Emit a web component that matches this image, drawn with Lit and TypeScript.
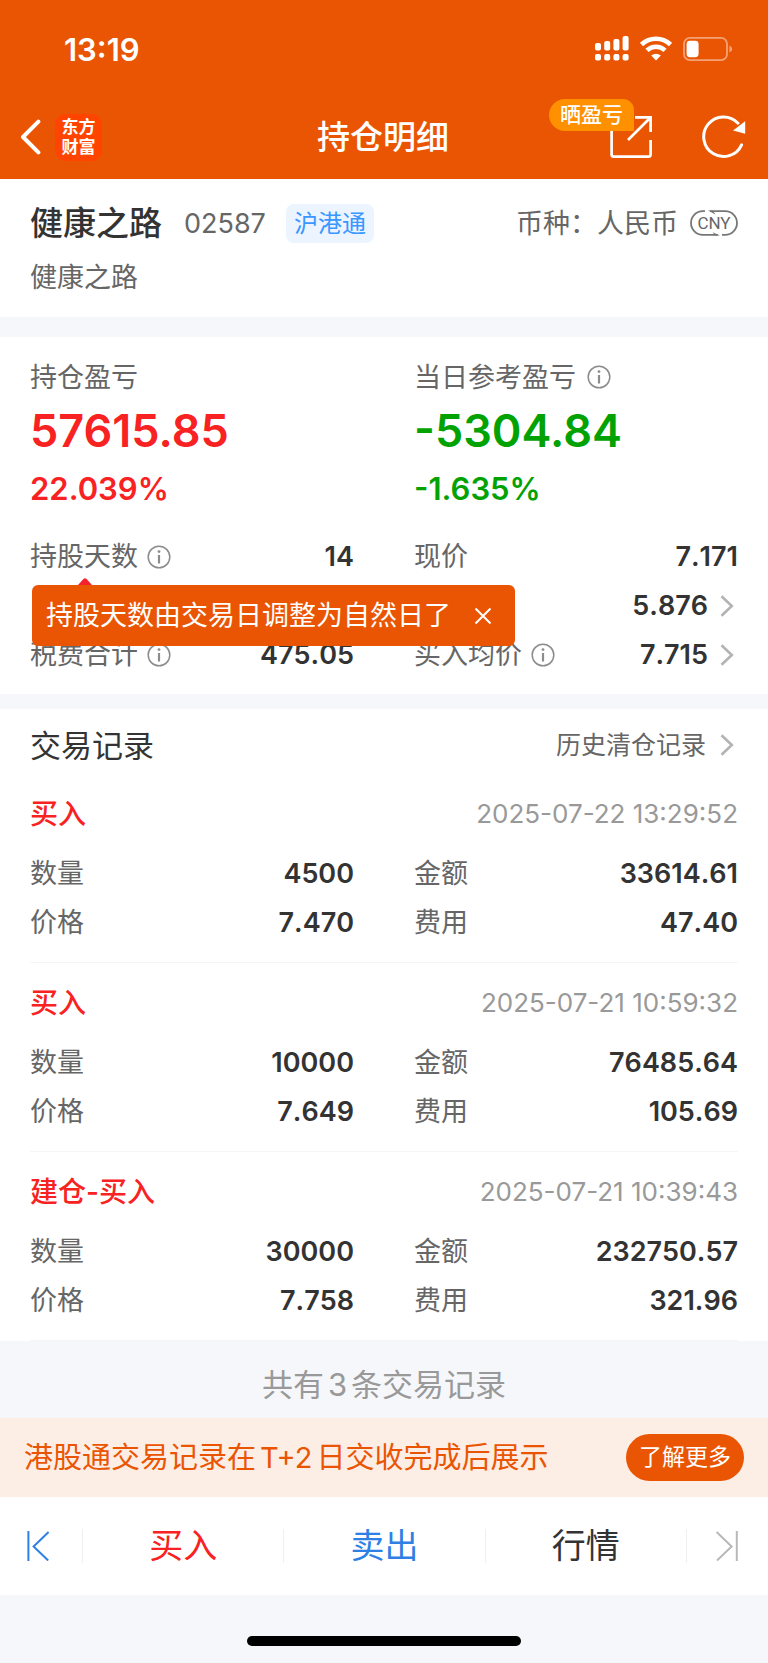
import { LitElement, html, css, svg, nothing } from "lit";
import { customElement, property, state } from "lit/decorators.js";

interface Field {
  label: string;
  value: string;
  info?: boolean;
  link?: boolean;
}

interface Trade {
  type: string;
  time: string;
  fields: Field[];
}

const positionFields: Field[] = [
  { label: "持股天数", value: "14", info: true },
  { label: "现价", value: "7.171" },
  { label: "", value: "" },
  { label: "", value: "5.876", link: true },
  { label: "税费合计", value: "475.05", info: true },
  { label: "买入均价", value: "7.715", info: true, link: true },
];

const trade = (type: string, time: string, qty: string, amount: string, price: string, fee: string): Trade => ({
  type,
  time,
  fields: [
    { label: "数量", value: qty },
    { label: "金额", value: amount },
    { label: "价格", value: price },
    { label: "费用", value: fee },
  ],
});

const trades: Trade[] = [
  trade("买入", "2025-07-22 13:29:52", "4500", "33614.61", "7.470", "47.40"),
  trade("买入", "2025-07-21 10:59:32", "10000", "76485.64", "7.649", "105.69"),
  trade("建仓-买入", "2025-07-21 10:39:43", "30000", "232750.57", "7.758", "321.96"),
];

const infoIcon = html`<svg width="24" height="24" viewBox="0 0 24 24" fill="none" stroke="#8c8c8c" aria-hidden="true">
  <circle cx="12" cy="12" r="10.8" stroke-width="1.5" />
  <path d="M12 10v8.5" stroke-width="2.2" />
  <circle cx="12" cy="6.6" r="1.4" fill="#8c8c8c" stroke="none" />
</svg>`;

const chevronIcon = html`<svg width="14" height="22" viewBox="0 0 14 22" fill="none" stroke="#b3b3b3" stroke-width="2.6" aria-hidden="true">
  <path d="M1.5 1.2 11.8 11 1.5 20.8" />
</svg>`;

@customElement("field-row")
class FieldRow extends LitElement {
  @property({ attribute: false }) field!: Field;

  static styles = css`
    :host {
      display: flex;
      align-items: center;
      justify-content: space-between;
      height: 49px;
    }
    .label {
      display: flex;
      align-items: center;
      gap: 9px;
      color: #666;
    }
    .value {
      display: flex;
      align-items: center;
      gap: 12px;
      font-weight: 600;
      font-kerning: none;
      color: #333;
      text-decoration: none;
    }
    .value svg {
      margin-right: 4px;
    }
    svg {
      display: block;
    }
  `;

  render() {
    const { label, value, info, link } = this.field;
    return html`
      <span class="label">${label}${info ? infoIcon : nothing}</span>
      ${link
        ? html`<a class="value" href="#">${value}${chevronIcon}</a>`
        : html`<span class="value">${value}</span>`}
    `;
  }
}

@customElement("app-root")
class AppRoot extends LitElement {
  @state() private tipOpen = true;

  static styles = css`
    :host {
      display: flex;
      flex-direction: column;
      min-height: 100vh;
      background: #f6f7fa;
      color: #333;
      font-family: Inter, "Noto Sans CJK SC", sans-serif;
      font-size: 27px;
      line-height: 1;
    }
    h1,
    h2,
    h3,
    p {
      margin: 0;
      font-weight: 400;
      font-size: inherit;
    }
    button {
      border: 0;
      padding: 0;
      background: none;
      font: inherit;
      color: inherit;
      cursor: pointer;
    }
    a {
      color: inherit;
      text-decoration: none;
    }
    svg {
      display: block;
    }
    .top {
      background: #ea5504;
      color: #fff;
      padding-bottom: 3px;
    }
    .status {
      display: flex;
      align-items: center;
      justify-content: space-between;
      height: 98px;
      padding: 0 35px 0 64px;
      font-size: 31px;
      font-weight: 600;
    }
    .status-icons {
      display: flex;
      align-items: center;
      gap: 11px;
    }
    .nav {
      display: grid;
      grid-template-columns: 1fr auto 1fr;
      align-items: center;
      height: 78px;
      padding: 0 22px 0 20px;
    }
    .nav-left {
      display: flex;
      align-items: center;
      gap: 14px;
    }
    .logo {
      display: grid;
      place-content: center;
      width: 47px;
      height: 47px;
      border-radius: 11px;
      background: #ff4400;
      font-size: 17px;
      line-height: 20px;
      font-weight: 700;
    }
    .title {
      font-size: 33px;
      font-weight: 500;
    }
    .nav-right {
      display: flex;
      align-items: center;
      justify-content: flex-end;
      gap: 49px;
    }
    .share {
      position: relative;
    }
    .badge {
      position: absolute;
      right: 19px;
      bottom: 28px;
      padding: 0 11px;
      border-radius: 16px 11px 0 16px;
      background: #ff9000;
      font-size: 21px;
      line-height: 32px;
      font-weight: 500;
      white-space: nowrap;
    }
    .card {
      background: #fff;
      padding: 0 30px;
    }
    .stock {
      padding-top: 17px;
      padding-bottom: 13px;
      margin-bottom: 20px;
      color: #666;
    }
    .stock-line {
      display: flex;
      align-items: center;
      height: 54px;
    }
    .stock-name {
      font-size: 33px;
      font-weight: 500;
      color: #333;
    }
    .stock-code {
      margin-left: 22px;
    }
    .tag {
      margin-left: 20px;
      padding: 0 8px;
      border-radius: 8px;
      background: #ebf4ff;
      color: #3a97ff;
      font-size: 24px;
      line-height: 39px;
    }
    .currency {
      display: flex;
      align-items: center;
      gap: 12px;
      margin-left: auto;
    }
    .position {
      padding-top: 13px;
      padding-bottom: 15px;
      margin-bottom: 15px;
    }
    .pair {
      display: grid;
      grid-template-columns: 1fr 1fr;
      column-gap: 60px;
    }
    .summary {
      margin-bottom: 12px;
    }
    .summary-label {
      display: flex;
      align-items: center;
      gap: 11px;
      height: 54px;
      color: #666;
    }
    .amount {
      font-size: 45px;
      line-height: 54px;
      font-weight: 600;
    }
    .percent {
      font-size: 31px;
      line-height: 62px;
      font-weight: 600;
    }
    .up {
      color: #f82222;
    }
    .down {
      color: #03a203;
    }
    .details {
      position: relative;
    }
    .tip {
      position: absolute;
      left: 2px;
      top: 53px;
      display: flex;
      align-items: center;
      gap: 23px;
      height: 61px;
      padding: 0 23px 0 14px;
      border-radius: 6px;
      background: #ea5504;
      color: #fff;
      white-space: nowrap;
    }
    .tip-arrow {
      position: absolute;
      left: 46px;
      top: -7px;
    }
    .records-head {
      display: flex;
      align-items: center;
      justify-content: space-between;
      height: 58px;
      padding-top: 7px;
    }
    .records-title {
      font-size: 31px;
    }
    .history {
      display: flex;
      align-items: center;
      gap: 14px;
      padding-right: 4px;
      font-size: 25px;
      color: #666;
    }
    .trade {
      padding: 16px 0 15px;
      border-bottom: 1px solid #f5f5f7;
    }
    .trade-head {
      display: flex;
      align-items: center;
      justify-content: space-between;
      height: 48px;
      margin-bottom: 11px;
    }
    .trade-type {
      font-size: 28px;
      font-weight: 500;
    }
    .trade-time {
      font-size: 26px;
      color: #999;
    }
    .total {
      padding-top: 11px;
      font-size: 31px;
      line-height: 66px;
      text-align: center;
      color: #999;
    }
    .latin {
      margin: 0 4px;
    }
    .notice {
      display: flex;
      align-items: center;
      justify-content: space-between;
      height: 79px;
      padding: 0 24px;
      background: #fceee5;
      color: #ea5504;
      font-size: 29px;
    }
    .more {
      padding: 0 13px;
      border-radius: 24px;
      background: #ea5504;
      color: #fff;
      font-size: 23px;
      line-height: 47px;
    }
    .tabs {
      display: grid;
      grid-template-columns: 82px 1fr 1fr 1fr 82px;
      align-items: center;
      height: 98px;
      background: #fff;
      font-size: 34px;
    }
    .tab {
      display: grid;
      place-items: center;
      height: 34px;
    }
    .tab + .tab {
      border-left: 1px solid #f0f0f0;
    }
    .tab-step {
      color: #2f80e4;
      padding-right: 6px;
    }
    .tab-end {
      color: #b8b8b8;
      padding: 0;
    }
    .buy {
      color: #f82222;
    }
    .sell {
      color: #2f80e4;
    }
    .home {
      width: 274px;
      height: 10px;
      margin: auto auto 17px;
      border-radius: 5px;
      background: #000;
    }
  `;

  private renderStatusIcons() {
    const tops = [7, 5, 3, 0];
    return html`<span class="status-icons">
      <svg width="34" height="26" viewBox="0 0 34 26" fill="#fff" aria-hidden="true">
        ${tops.map(
          (top, i) => svg`
            <rect x=${i * 9.2} y=${top} width="6" height=${14.6 - top} rx="2" />
            <rect x=${i * 9.2} y="18" width="6" height="6.6" rx="2" />`,
        )}
      </svg>
      <svg width="32" height="26" viewBox="0 0 32 26" aria-hidden="true">
        <g fill="none" stroke="#fff" stroke-width="4.6">
          <path d="M1.5 8.6a21 21 0 0 1 29 0" />
          <path d="M7 14.4a13 13 0 0 1 18 0" />
        </g>
        <path d="M16 24.5 11.2 19.6a7 7 0 0 1 9.6 0z" fill="#fff" />
      </svg>
      <svg width="50" height="26" viewBox="0 0 50 26" aria-hidden="true">
        <g opacity=".45">
          <rect x="1" y="1.8" width="43" height="22.4" rx="6" fill="none" stroke="#fff" stroke-width="1.8" />
          <path d="M46.4 9.4q2.8 1 2.8 3.6t-2.8 3.6z" fill="#fff" />
        </g>
        <rect x="3.6" y="4.8" width="12" height="16.4" rx="3.4" fill="#fff" />
      </svg>
    </span>`;
  }

  private renderFields(fields: Field[]) {
    return html`<div class="pair">${fields.map((f) => html`<field-row .field=${f}></field-row>`)}</div>`;
  }

  render() {
    return html`
      <header class="top">
        <div class="status"><span>13:19</span>${this.renderStatusIcons()}</div>
        <nav class="nav">
          <div class="nav-left">
            <button aria-label="返回">
              <svg width="21" height="36" viewBox="0 0 21 36" fill="none" stroke="#fff" stroke-width="4" stroke-linecap="round" stroke-linejoin="round">
                <path d="M18.4 2.6 3 18l15.4 15.4" />
              </svg>
            </button>
            <div class="logo"><span>东方</span><span>财富</span></div>
          </div>
          <h1 class="title">持仓明细</h1>
          <div class="nav-right">
            <button class="share">
              <svg width="44" height="44" viewBox="0 0 44 44" fill="none" stroke="#fff" stroke-width="2.7" aria-hidden="true">
                <path d="M2.6 9v30.6a2 2 0 0 0 2 2h35a2 2 0 0 0 2-2V25" />
                <path d="M26 2.4h15.6V17" />
                <path d="M41 3 19 25" />
              </svg>
              <span class="badge">晒盈亏</span>
            </button>
            <button aria-label="刷新">
              <svg width="44" height="44" viewBox="0 0 44 44" aria-hidden="true">
                <path d="M39.6 29.8A19.8 19.8 0 1 1 36 8.2" fill="none" stroke="#fff" stroke-width="3" stroke-linecap="round" />
                <path d="M31 15.4 43.2 6.2v12.6z" fill="#fff" />
              </svg>
            </button>
          </div>
        </nav>
      </header>

      <section class="card stock">
        <div class="stock-line">
          <h2 class="stock-name">健康之路</h2>
          <span class="stock-code">02587</span>
          <span class="tag">沪港通</span>
          <div class="currency">
            <span>币种：人民币</span>
            <svg width="48" height="26" viewBox="0 0 48 26" fill="none" stroke="#777" stroke-width="1.8" aria-hidden="true">
              <path d="M15 1.2h-2.2a11.8 11.8 0 0 0 0 23.6h15" />
              <path d="M32 24.8h3.2a11.8 11.8 0 0 0 0-23.6H20" />
              <path d="M18 .4h5l2.4 4.2zM30 25.6h-5l-2.4-3.4z" fill="#777" stroke="none" />
              <text x="24" y="19" text-anchor="middle" font-size="17" font-family="Roboto, sans-serif" fill="#666" stroke="none">CNY</text>
            </svg>
          </div>
        </div>
        <p class="stock-line">健康之路</p>
      </section>

      <section class="card position">
        <div class="pair summary">
          <div class="up">
            <div class="summary-label">持仓盈亏</div>
            <div class="amount">57615.85</div>
            <div class="percent">22.039%</div>
          </div>
          <div class="down">
            <div class="summary-label">当日参考盈亏${infoIcon}</div>
            <div class="amount">-5304.84</div>
            <div class="percent">-1.635%</div>
          </div>
        </div>
        <div class="details">
          ${this.renderFields(positionFields)}
          ${this.tipOpen
            ? html`<div class="tip" role="status">
                <svg class="tip-arrow" width="14" height="7" viewBox="0 0 14 7" aria-hidden="true">
                  <path d="M0 7 5.6.8q1.4-1.3 2.8 0L14 7z" fill="#f5222d" />
                </svg>
                <span>持股天数由交易日调整为自然日了</span>
                <button aria-label="关闭" @click=${() => (this.tipOpen = false)}>
                  <svg width="18" height="18" viewBox="0 0 18 18" stroke="#fff" stroke-width="2">
                    <path d="m1.5 1.5 15 15m0-15-15 15" />
                  </svg>
                </button>
              </div>`
            : nothing}
        </div>
      </section>

      <section class="card">
        <div class="records-head">
          <h2 class="records-title">交易记录</h2>
          <a class="history" href="#">历史清仓记录${chevronIcon}</a>
        </div>
        ${trades.map(
          (t) => html`<article class="trade">
            <div class="trade-head">
              <h3 class="trade-type up">${t.type}</h3>
              <time class="trade-time">${t.time}</time>
            </div>
            ${this.renderFields(t.fields)}
          </article>`,
        )}
      </section>
      <p class="total">共有<span class="latin">${trades.length}</span>条交易记录</p>

      <aside class="notice">
        <span>港股通交易记录在<span class="latin">T+2</span>日交收完成后展示</span>
        <button class="more">了解更多</button>
      </aside>

      <nav class="tabs">
        <button class="tab tab-step" aria-label="上一只">
          <svg width="24" height="30" viewBox="0 0 24 30" fill="none" stroke="currentColor" stroke-width="2">
            <path d="M2.4 0v30M22.6 1 7.6 15.5l14.6 14" />
          </svg>
        </button>
        <button class="tab buy">买入</button>
        <button class="tab sell">卖出</button>
        <button class="tab">行情</button>
        <button class="tab tab-end" aria-label="下一只">
          <svg width="24" height="30" viewBox="0 0 24 30" fill="none" stroke="currentColor" stroke-width="2">
            <path d="M21.8 0v30M1.6 1 16.6 15.5 2 29.5" />
          </svg>
        </button>
      </nav>
      <div class="home"></div>
    `;
  }
}
